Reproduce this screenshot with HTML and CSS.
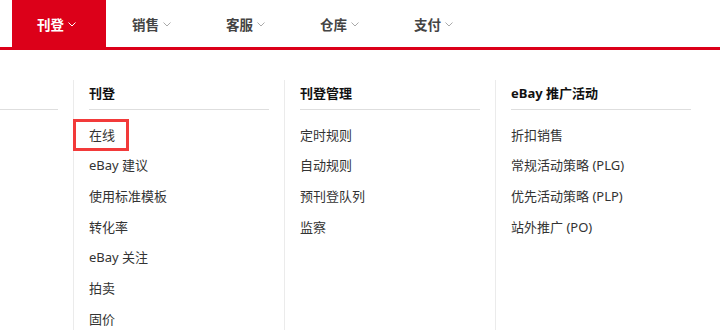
FILE: index.html
```html
<!DOCTYPE html>
<html lang="zh-CN">
<head>
<meta charset="utf-8">
<link rel="stylesheet" href="styles.css">
</head>
<body>
<nav class="topnav">
  <a class="tab active">刊登<svg class="chev" viewBox="0 0 8 5"><polyline points="0.5,0.5 4,4 7.5,0.5"/></svg></a>
  <a class="tab">销售<svg class="chev" viewBox="0 0 8 5"><polyline points="0.5,0.5 4,4 7.5,0.5"/></svg></a>
  <a class="tab">客服<svg class="chev" viewBox="0 0 8 5"><polyline points="0.5,0.5 4,4 7.5,0.5"/></svg></a>
  <a class="tab">仓库<svg class="chev" viewBox="0 0 8 5"><polyline points="0.5,0.5 4,4 7.5,0.5"/></svg></a>
  <a class="tab">支付<svg class="chev" viewBox="0 0 8 5"><polyline points="0.5,0.5 4,4 7.5,0.5"/></svg></a>
</nav>
<div class="dropdown">
  <div class="col stub"><div class="col-title">&nbsp;</div></div>
  <div class="col">
    <div class="col-title">刊登</div>
    <ul class="items">
      <li><a class="item highlight">在线</a></li>
      <li><a class="item">eBay 建议</a></li>
      <li><a class="item">使用标准模板</a></li>
      <li><a class="item">转化率</a></li>
      <li><a class="item">eBay 关注</a></li>
      <li><a class="item">拍卖</a></li>
      <li><a class="item">固价</a></li>
    </ul>
  </div>
  <div class="col">
    <div class="col-title">刊登管理</div>
    <ul class="items">
      <li><a class="item">定时规则</a></li>
      <li><a class="item">自动规则</a></li>
      <li><a class="item">预刊登队列</a></li>
      <li><a class="item">监察</a></li>
    </ul>
  </div>
  <div class="col">
    <div class="col-title">eBay 推广活动</div>
    <ul class="items">
      <li><a class="item">折扣销售</a></li>
      <li><a class="item">常规活动策略 (PLG)</a></li>
      <li><a class="item">优先活动策略 (PLP)</a></li>
      <li><a class="item">站外推广 (PO)</a></li>
    </ul>
  </div>
</div>
</body>
</html>
```
FILE: styles.css
```css
* { box-sizing: border-box; }
html, body { margin: 0; padding: 0; background: #fff; }
body {
  width: 720px;
  height: 330px;
  overflow: hidden;
  font-family: "Noto Sans", "Noto Sans CJK SC", sans-serif;
  font-size: 13px;
  color: #333;
}
.topnav {
  display: flex;
  height: 50px;
  padding-left: 12px;
  border-bottom: 3px solid #dc0019;
}
.tab {
  display: flex;
  align-items: center;
  width: 94px;
  height: 47px;
  padding-left: 26px;
  font-weight: bold;
  font-size: 13.5px;
  color: #444;
  text-decoration: none;
}
.tab.active {
  background: #dc0019;
  color: #fff;
  padding-left: 25px;
}
.chev {
  width: 8px;
  height: 5px;
  margin-left: 4px;
  margin-top: 2px;
  fill: none;
  stroke: #aaa;
  stroke-width: 1;
}
.tab.active .chev { stroke: #fff; }
.dropdown {
  display: flex;
  margin-top: 30px;
  height: 250px;
}
.col {
  width: 211px;
  padding: 0 15px;
  border-left: 1px solid #ebebeb;
}
.col.stub {
  width: 73px;
  padding-left: 0;
  border-left: none;
}
.col-title {
  height: 30px;
  padding-top: 3px;
  line-height: 20px;
  font-weight: bold;
  color: #111;
  border-bottom: 1px solid #dedede;
}
.items {
  list-style: none;
  margin: 9.7px 0 0;
  padding: 0;
}
.items li {
  height: 30.67px;
  line-height: 30.67px;
}
.item {
  position: relative;
  color: #333;
  text-decoration: none;
  white-space: nowrap;
}
.highlight::after {
  content: "";
  position: absolute;
  left: -16px;
  right: -14px;
  top: -7px;
  bottom: -7px;
  border: 3px solid #f23a3a;
}
```
